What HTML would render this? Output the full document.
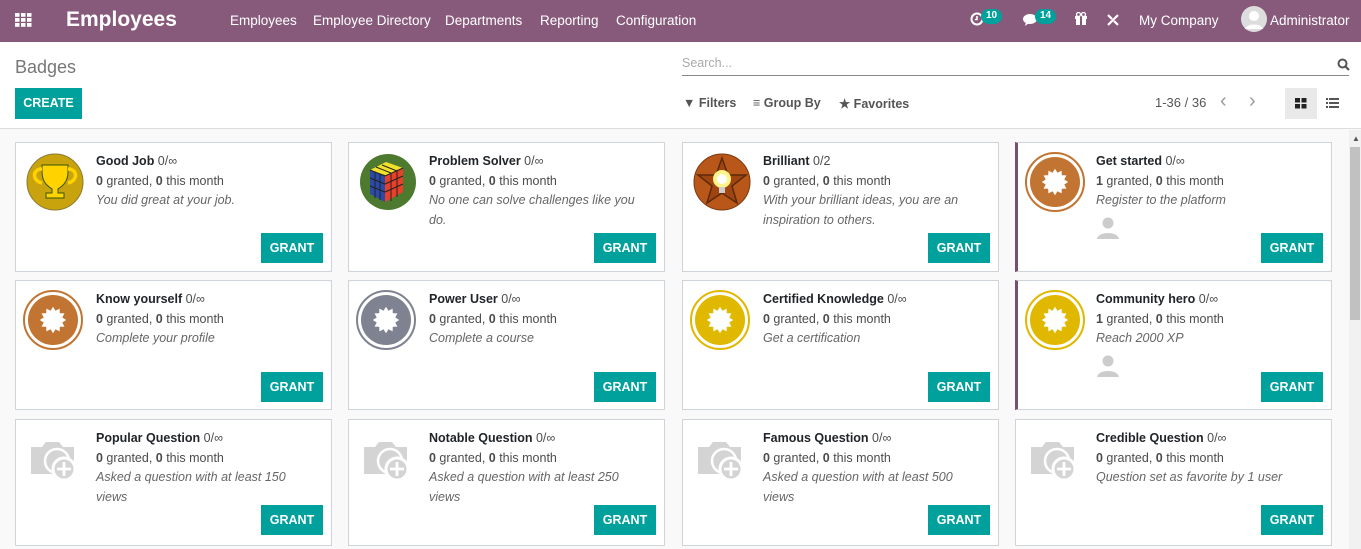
<!DOCTYPE html>
<html><head><meta charset="utf-8">
<style>
*{box-sizing:border-box;margin:0;padding:0}
body{width:1361px;height:549px;overflow:hidden;font-family:"Liberation Sans",sans-serif;background:#f9f9f9;color:#4c4c4c;font-size:13px;position:relative}
.nav{position:absolute;left:0;top:0;width:1361px;height:42px;background:#875a7b;color:#fff}
.nav span{position:absolute;top:13px;font-size:13.5px}
.brand{position:absolute;left:66px;top:8px;font-size:21px;font-weight:bold;color:#fff}
.badge{position:absolute;top:9px;background:#00a09d;color:#fff;font-size:10px;font-weight:bold;border-radius:8px;padding:1px 5px;height:15px}
.cp{position:absolute;left:0;top:42px;width:1361px;height:87px;background:#fff;border-bottom:1px solid #ddd}
.btn{position:absolute;background:#00a09d;color:#fff;font-weight:bold;font-size:12.5px;text-align:center}
.card{position:absolute;width:317px;background:#fff;border:1px solid #ced4da}
.card .img{position:absolute;left:9px;top:9px;width:60px;height:60px}
.card .t{position:absolute;left:80px;top:9px;width:212px;line-height:19.5px;font-size:12.5px;color:#4c4c4c}
.card .t b.n{color:#212529}
.card i{color:#666}
.g{position:absolute;right:8px;width:62px;height:30px;line-height:30px}
.sel{border-left:3px solid #7c4e6e}
.av{display:block;margin-top:4px;width:24px;height:24px}
</style></head><body>
<div class="nav">
 <svg style="position:absolute;left:15px;top:13px" width="17" height="15"><g fill="#fff"><rect x="0" y="0" width="4.5" height="3.8"/><rect x="6" y="0" width="4.5" height="3.8"/><rect x="12" y="0" width="4.5" height="3.8"/><rect x="0" y="5" width="4.5" height="3.8"/><rect x="6" y="5" width="4.5" height="3.8"/><rect x="12" y="5" width="4.5" height="3.8"/><rect x="0" y="10" width="4.5" height="3.8"/><rect x="6" y="10" width="4.5" height="3.8"/><rect x="12" y="10" width="4.5" height="3.8"/></g></svg>
 <div class="brand">Employees</div>
 <span style="left:230px">Employees</span>
 <span style="left:313px">Employee Directory</span>
 <span style="left:445px">Departments</span>
 <span style="left:540px">Reporting</span>
 <span style="left:616px">Configuration</span>
 <svg style="position:absolute;left:970px;top:12px" width="14" height="14"><circle cx="7" cy="7" r="5.5" fill="none" stroke="#fff" stroke-width="2"/><path d="M7 4v3.5h-2" stroke="#fff" stroke-width="1.6" fill="none"/></svg>
 <div class="badge" style="left:981px">10</div>
 <svg style="position:absolute;left:1023px;top:13px" width="16" height="14"><ellipse cx="7" cy="6" rx="7" ry="5" fill="#fff"/><path d="M3 9l-1 4 4-3z" fill="#fff"/></svg>
 <div class="badge" style="left:1035px">14</div>
 <svg style="position:absolute;left:1074px;top:12px" width="14" height="14"><rect x="1" y="4" width="12" height="3" fill="#fff"/><rect x="2" y="7" width="10" height="6" fill="#fff"/><rect x="6" y="4" width="2" height="9" fill="#875a7b"/><circle cx="4.5" cy="2.5" r="2" fill="none" stroke="#fff" stroke-width="1.3"/><circle cx="9.5" cy="2.5" r="2" fill="none" stroke="#fff" stroke-width="1.3"/></svg>
 <svg style="position:absolute;left:1106px;top:13px" width="14" height="14"><path d="M2 12L12 2M2 2l4 4M8 8l4 4" stroke="#fff" stroke-width="2.2" fill="none"/></svg>
 <span style="left:1139px">My Company</span>
 <svg style="position:absolute;left:1241px;top:6px" width="26" height="26"><circle cx="13" cy="13" r="13" fill="#ddd"/><circle cx="13" cy="10" r="5" fill="#fff"/><path d="M4 23c2-6 16-6 18 0z" fill="#fff"/></svg>
 <span style="left:1270px">Administrator</span>
</div>
<div class="cp">
 <div style="position:absolute;left:15px;top:15px;font-size:18px;color:#777">Badges</div>
 <div class="btn" style="left:15px;top:46px;width:67px;height:31px;line-height:31px">CREATE</div>
 <div style="position:absolute;left:682px;top:14px;font-size:12.5px;color:#aaa">Search...</div>
 <div style="position:absolute;left:682px;top:33px;width:667px;height:1px;background:#888"></div>
 <svg style="position:absolute;left:1337px;top:16px" width="13" height="13"><circle cx="5.5" cy="5.5" r="4" fill="none" stroke="#555" stroke-width="2"/><path d="M8.5 8.5l3.5 3.5" stroke="#555" stroke-width="2.2"/></svg>
 <div style="position:absolute;left:683px;top:54px;font-size:12.5px;color:#555;font-weight:bold">
  <span style="position:absolute;left:0;white-space:nowrap">▼ Filters</span>
  <span style="position:absolute;left:70px;white-space:nowrap">≡ Group By</span>
  <span style="position:absolute;left:156px;white-space:nowrap">★ Favorites</span>
 </div>
 <div style="position:absolute;left:1155px;top:53px;font-size:13px;color:#555">1-36 / 36</div>
 <div style="position:absolute;left:1220px;top:48px;font-size:20px;color:#999">‹</div>
 <div style="position:absolute;left:1249px;top:48px;font-size:20px;color:#999">›</div>
 <div style="position:absolute;left:1285px;top:46px;width:32px;height:31px;background:#e9e9e9"></div>
 <svg style="position:absolute;left:1295px;top:56px" width="12" height="11"><rect x="0" y="0" width="5" height="4.5" fill="#222"/><rect x="6.5" y="0" width="5" height="4.5" fill="#222"/><rect x="0" y="6" width="5" height="4.5" fill="#222"/><rect x="6.5" y="6" width="5" height="4.5" fill="#222"/></svg>
 <svg style="position:absolute;left:1326px;top:56px" width="13" height="11"><g fill="#555"><rect x="0" y="0" width="2" height="2"/><rect x="3" y="0" width="10" height="2"/><rect x="0" y="4" width="2" height="2"/><rect x="3" y="4" width="10" height="2"/><rect x="0" y="8" width="2" height="2"/><rect x="3" y="8" width="10" height="2"/></g></svg>
</div>
<div style="position:absolute;left:1349px;top:130px;width:12px;height:419px;background:#f1f1f1"></div>
<div style="position:absolute;left:1350px;top:147px;width:10px;height:173px;background:#c1c1c1"></div>
<div style="position:absolute;left:1352px;top:134px;font-size:8px;color:#555">▲</div>

<svg width="0" height="0" style="position:absolute">
 <defs>
  <polygon id="st" points="11,0 7.73,2.07 9.53,5.5 5.66,5.66 5.5,9.53 2.07,7.73 0,11 -2.07,7.73 -5.5,9.53 -5.66,5.66 -9.53,5.5 -7.73,2.07 -11,0 -7.73,-2.07 -9.53,-5.5 -5.66,-5.66 -5.5,-9.53 -2.07,-7.73 0,-11 2.07,-7.73 5.5,-9.53 5.66,-5.66 9.53,-5.5 7.73,-2.07" fill="#fff"/>
  <g id="cam"><path d="M-24 -12h11l4 -5h13l4 5h11v27h-43z" fill="#d4d4d4"/><circle cx="2" cy="2" r="12" fill="#d4d4d4" stroke="#fff" stroke-width="2.5"/><circle cx="9" cy="10" r="11" fill="#d4d4d4" stroke="#fff" stroke-width="3"/><path d="M9 3v14M2 10h14" stroke="#fff" stroke-width="2.8"/></g>
 </defs>
</svg>

<div class="card" style="left:15px;top:142px;height:130px">
 <svg class="img" viewBox="-30 -30 60 60"><circle r="28" fill="#c9a30d" stroke="#8a7a30" stroke-width="1"/><path d="M-13 -17h26v7c0 11-7 15-10 17v4h6v5h-18v-5h6v-4c-3-2-10-6-10-17z" fill="#ffd200" stroke="#335500" stroke-width="1"/><path d="M-13 -13c-10 0-10 12 0 14M13 -13c10 0 10 12 0 14" fill="none" stroke="#ffd200" stroke-width="3.5"/></svg>
 <div class="t"><b class="n">Good Job</b> 0/∞<br><b>0</b> granted, <b>0</b> this month<br><i>You did great at your job.</i></div>
 <div class="btn g" style="top:90px">GRANT</div>
</div>
<div class="card" style="left:348px;top:142px;height:130px">
 <svg class="img" viewBox="-30 -30 60 60"><circle r="28" fill="#4d7a2f"/><path d="M-18 -12l16 -8 17 6 -15 8z" fill="#f3e02a"/><path d="M-18 -12l15 6v26l-15-8z" fill="#2b4aa8"/><path d="M-3 -6l18 -8v24l-18 10z" fill="#e8402a"/><path d="M-18 -12l15 6 18-8M-12 -15l15 6M-6 -17l15 6M-18-4l15 6M-18 4l15 6M3 -9v28M9 -11v26M-13 -10v26M-8 -8v26M-3 2l18-8M-3 10l18-8" stroke="#222" stroke-width="1" fill="none"/></svg>
 <div class="t"><b class="n">Problem Solver</b> 0/∞<br><b>0</b> granted, <b>0</b> this month<br><i>No one can solve challenges like you do.</i></div>
 <div class="btn g" style="top:90px">GRANT</div>
</div>
<div class="card" style="left:682px;top:142px;height:130px">
 <svg class="img" viewBox="-30 -30 60 60"><circle r="28" fill="#b9561a" stroke="#7a3a12" stroke-width="1"/><polygon points="0,-24 6,-7 24,-7 10,4 15,21 0,11 -15,21 -10,4 -24,-7 -6,-7" fill="#a04510" stroke="#5a2a0a" stroke-width="1.5"/><circle cy="-3" r="9" fill="#fff48a"/><circle cy="-3" r="5" fill="#fff"/><rect x="-3" y="5" width="6" height="6" fill="#ccc"/></svg>
 <div class="t"><b class="n">Brilliant</b> 0/2<br><b>0</b> granted, <b>0</b> this month<br><i>With your brilliant ideas, you are an inspiration to others.</i></div>
 <div class="btn g" style="top:90px">GRANT</div>
</div>
<div class="card sel" style="left:1015px;top:142px;height:130px">
 <svg class="img" style="left:7px" viewBox="-30 -30 60 60"><circle r="29" fill="none" stroke="#c27532" stroke-width="2"/><circle r="25" fill="#c27532"/><use href="#st" transform="scale(1.2)"/></svg>
 <div class="t" style="left:78px"><b class="n">Get started</b> 0/∞<br><b>1</b> granted, <b>0</b> this month<br><i>Register to the platform</i><svg class="av" viewBox="0 0 24 24"><circle cx="12" cy="8" r="5.5" fill="#ccc"/><path d="M1 24c1-8 21-8 22 0z" fill="#ccc"/></svg></div>
 <div class="btn g" style="top:90px">GRANT</div>
</div>
<div class="card" style="left:15px;top:280px;height:130px">
 <svg class="img" style="left:7px" viewBox="-30 -30 60 60"><circle r="29" fill="none" stroke="#c27532" stroke-width="2"/><circle r="25" fill="#c27532"/><use href="#st" transform="scale(1.2)"/></svg>
 <div class="t"><b class="n">Know yourself</b> 0/∞<br><b>0</b> granted, <b>0</b> this month<br><i>Complete your profile</i></div>
 <div class="btn g" style="top:91px">GRANT</div>
</div>
<div class="card" style="left:348px;top:280px;height:130px">
 <svg class="img" style="left:7px" viewBox="-30 -30 60 60"><circle r="29" fill="none" stroke="#7f8391" stroke-width="2"/><circle r="25" fill="#7f8391"/><use href="#st" transform="scale(1.2)"/></svg>
 <div class="t"><b class="n">Power User</b> 0/∞<br><b>0</b> granted, <b>0</b> this month<br><i>Complete a course</i></div>
 <div class="btn g" style="top:91px">GRANT</div>
</div>
<div class="card" style="left:682px;top:280px;height:130px">
 <svg class="img" style="left:7px" viewBox="-30 -30 60 60"><circle r="29" fill="none" stroke="#e0b800" stroke-width="2"/><circle r="25" fill="#e0b800"/><use href="#st" transform="scale(1.2)"/></svg>
 <div class="t"><b class="n">Certified Knowledge</b> 0/∞<br><b>0</b> granted, <b>0</b> this month<br><i>Get a certification</i></div>
 <div class="btn g" style="top:91px">GRANT</div>
</div>
<div class="card sel" style="left:1015px;top:280px;height:130px">
 <svg class="img" style="left:7px" viewBox="-30 -30 60 60"><circle r="29" fill="none" stroke="#e0b800" stroke-width="2"/><circle r="25" fill="#e0b800"/><use href="#st" transform="scale(1.2)"/></svg>
 <div class="t" style="left:78px"><b class="n">Community hero</b> 0/∞<br><b>1</b> granted, <b>0</b> this month<br><i>Reach 2000 XP</i><svg class="av" viewBox="0 0 24 24"><circle cx="12" cy="8" r="5.5" fill="#ccc"/><path d="M1 24c1-8 21-8 22 0z" fill="#ccc"/></svg></div>
 <div class="btn g" style="top:91px">GRANT</div>
</div>
<div class="card" style="left:15px;top:419px;height:127px">
 <svg class="img" viewBox="-30 -30 60 60"><use href="#cam"/></svg>
 <div class="t"><b class="n">Popular Question</b> 0/∞<br><b>0</b> granted, <b>0</b> this month<br><i>Asked a question with at least 150 views</i></div>
 <div class="btn g" style="top:85px">GRANT</div>
</div>
<div class="card" style="left:348px;top:419px;height:127px">
 <svg class="img" viewBox="-30 -30 60 60"><use href="#cam"/></svg>
 <div class="t"><b class="n">Notable Question</b> 0/∞<br><b>0</b> granted, <b>0</b> this month<br><i>Asked a question with at least 250 views</i></div>
 <div class="btn g" style="top:85px">GRANT</div>
</div>
<div class="card" style="left:682px;top:419px;height:127px">
 <svg class="img" viewBox="-30 -30 60 60"><use href="#cam"/></svg>
 <div class="t"><b class="n">Famous Question</b> 0/∞<br><b>0</b> granted, <b>0</b> this month<br><i>Asked a question with at least 500 views</i></div>
 <div class="btn g" style="top:85px">GRANT</div>
</div>
<div class="card" style="left:1015px;top:419px;height:127px">
 <svg class="img" viewBox="-30 -30 60 60"><use href="#cam"/></svg>
 <div class="t" style="width:230px"><b class="n">Credible Question</b> 0/∞<br><b>0</b> granted, <b>0</b> this month<br><i>Question set as favorite by 1 user</i></div>
 <div class="btn g" style="top:85px">GRANT</div>
</div>
</body></html>
